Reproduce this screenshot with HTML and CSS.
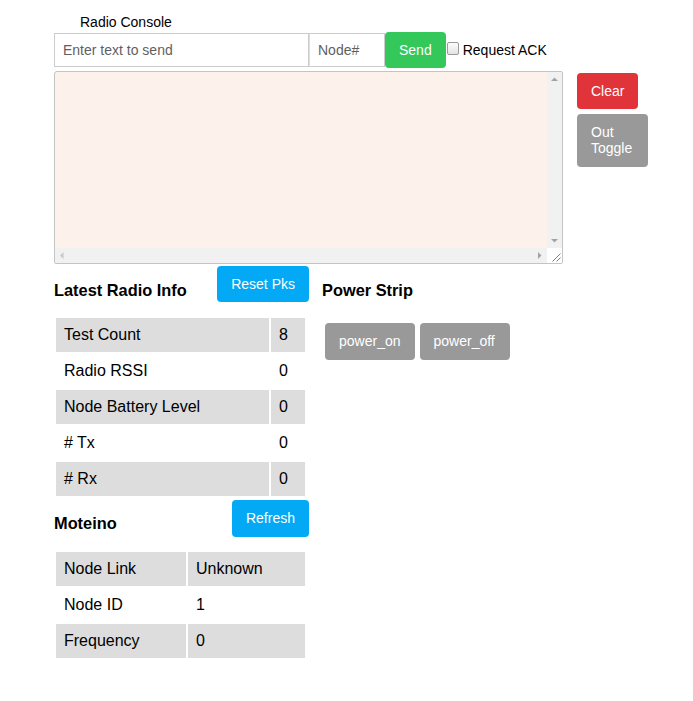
FILE: index.html
```html
<!DOCTYPE html>
<html>
<head>
<meta charset="utf-8">
<link rel="stylesheet" href="styles.css">
</head>
<body>
<div class="page">
  <div class="title">Radio Console</div>
  <div class="send-row">
    <input class="txt" type="text" placeholder="Enter text to send">
    <input class="node" type="text" placeholder="Node#">
    <button class="btn green">Send</button>
    <input class="chk" type="checkbox" id="ack"><label for="ack" class="ack">Request ACK</label>
  </div>
  <div class="console-row">
    <div class="console">
      <textarea class="console-text"></textarea>
      <div class="vbar">
        <svg width="15" height="15" viewBox="0 0 15 15"><path d="M4 9 L7.5 5.5 L11 9 Z" fill="#a3a3a3"/></svg>
        <svg width="15" height="15" viewBox="0 0 15 15"><path d="M4 6 L11 6 L7.5 9.5 Z" fill="#a3a3a3"/></svg>
      </div>
      <div class="hbar">
        <svg width="15" height="15" viewBox="0 0 15 15"><path d="M8.5 4 L5 7.5 L8.5 11 Z" fill="#c8c8c8"/></svg>
        <svg width="15" height="15" viewBox="0 0 15 15"><path d="M6 4 L9.5 7.5 L6 11 Z" fill="#a3a3a3"/></svg>
      </div>
      <div class="corner">
        <svg width="15" height="15" viewBox="0 0 15 15"><path d="M13.5 5.5 L5.5 13.5 M13.5 9.5 L9.5 13.5" stroke="#808080" stroke-width="1"/></svg>
      </div>
    </div>
    <div class="side">
      <button class="btn red">Clear</button>
      <button class="btn gray toggle">Out Toggle</button>
    </div>
  </div>
  <div class="lower">
    <div class="left">
      <div class="head">
        <h3 class="h">Latest Radio Info</h3>
        <button class="btn blue">Reset Pks</button>
      </div>
      <table class="info t1">
        <colgroup><col class="c1a"><col class="c1b"></colgroup>
        <tr class="g"><td>Test Count</td><td>8</td></tr>
        <tr><td>Radio RSSI</td><td>0</td></tr>
        <tr class="g"><td>Node Battery Level</td><td>0</td></tr>
        <tr><td># Tx</td><td>0</td></tr>
        <tr class="g"><td># Rx</td><td>0</td></tr>
      </table>
      <div class="head">
        <h3 class="h h2">Moteino</h3>
        <button class="btn blue tall">Refresh</button>
      </div>
      <table class="info t2">
        <colgroup><col class="c2a"><col class="c2b"></colgroup>
        <tr class="g"><td>Node Link</td><td>Unknown</td></tr>
        <tr><td>Node ID</td><td>1</td></tr>
        <tr class="g"><td>Frequency</td><td>0</td></tr>
      </table>
    </div>
    <div class="right">
      <h3 class="h">Power Strip</h3>
      <div class="power">
        <button class="btn gray tall">power_on</button>
        <button class="btn gray tall pw">power_off</button>
      </div>
    </div>
  </div>
</div>
</body>
</html>
```

FILE: styles.css
```css
html, body {
  margin: 0;
  padding: 0;
  background: #fff;
}
body {
  font-family: "Liberation Sans", Arial, sans-serif;
  color: #000;
}
.page {
  padding-left: 54px;
}
.title {
  padding: 13px 0 0 26px;
  font-size: 14px;
  line-height: 18px;
  margin-bottom: 1px;
}
.send-row {
  display: flex;
  align-items: center;
  height: 36px;
}
.txt, .node {
  box-sizing: border-box;
  height: 34px;
  border: 1px solid #ccc;
  padding: 0 8px;
  font-family: "Liberation Sans", Arial, sans-serif;
  font-size: 14px;
  margin: 0;
  outline: none;
}
.txt::placeholder, .node::placeholder { color: #5f5f5f; }
.txt { width: 255px; }
.node { width: 76px; border-left: 1px solid #ddd; }
.btn {
  border: none;
  border-radius: 4px;
  color: #fff;
  font-family: "Liberation Sans", Arial, sans-serif;
  font-size: 14px;
  line-height: 16px;
  padding: 10px 14px;
  margin: 0;
  cursor: pointer;
}
.btn.tall { padding: 10px 14px 11px; }
.btn.pw { padding-right: 15px; }
.green { background: #34c759; }
.red { background: #e0333a; }
.blue { background: #03a9f4; }
.gray { background: #999999; }
.chk {
  appearance: none;
  -webkit-appearance: none;
  box-sizing: border-box;
  width: 12px;
  height: 13px;
  margin: -3px 4px 0 1px;
  border: 1px solid #9a9a9a;
  border-radius: 2px;
  background: linear-gradient(#fcfcfc, #e4e4e4);
}
.ack { font-size: 14px; }
.console-row {
  display: flex;
  align-items: flex-start;
  margin-top: 3px;
}
.console {
  box-sizing: border-box;
  width: 509px;
  height: 193px;
  background: #fdf1ec;
  border: 1px solid #c4c4c4;
  border-radius: 3px 2px 2px 2px;
  display: grid;
  grid-template-columns: 1fr 15px;
  grid-template-rows: 1fr 15px;
  overflow: hidden;
}
.console-text {
  border: none;
  background: transparent;
  resize: none;
  outline: none;
  margin: 0;
  padding: 2px;
  min-width: 0;
  min-height: 0;
}
.vbar {
  background: #f1f1f1;
  display: flex;
  flex-direction: column;
  justify-content: space-between;
}
.hbar {
  background: #f1f1f1;
  display: flex;
  justify-content: space-between;
}
.vbar svg, .hbar svg, .corner svg { display: block; }
.corner { background: #fff; }
.side {
  display: flex;
  flex-direction: column;
  align-items: flex-start;
  gap: 5px;
  margin: 2px 0 0 14px;
}
.toggle {
  width: 71px;
  text-align: left;
  padding: 10px 14px 11px;
}
.lower {
  display: flex;
  align-items: flex-start;
}
.left {
  width: 255px;
}
.head {
  display: flex;
  justify-content: space-between;
  align-items: flex-start;
  height: 52px;
}
.head .btn { margin-top: 2px; }
.h {
  margin: 17px 0 0;
  font-size: 16.38px;
  line-height: 18px;
  font-weight: bold;
}
.h2 { margin-top: 16px; }
.info {
  border-spacing: 2px;
  table-layout: fixed;
  font-size: 16px;
}
.t1 { width: 253px; }
.t2 { width: 253px; }
.c1a { width: 213px; }
.c1b { width: 34px; }
.c2a { width: 130px; }
.c2b { width: 117px; }
.info td {
  padding: 8px 8px;
  line-height: 18px;
  white-space: nowrap;
}
.info tr.g td { background: #dddddd; }
.right {
  margin-left: 13px;
}
.power {
  display: flex;
  gap: 5px;
  margin: 24px 0 0 3px;
}
```
